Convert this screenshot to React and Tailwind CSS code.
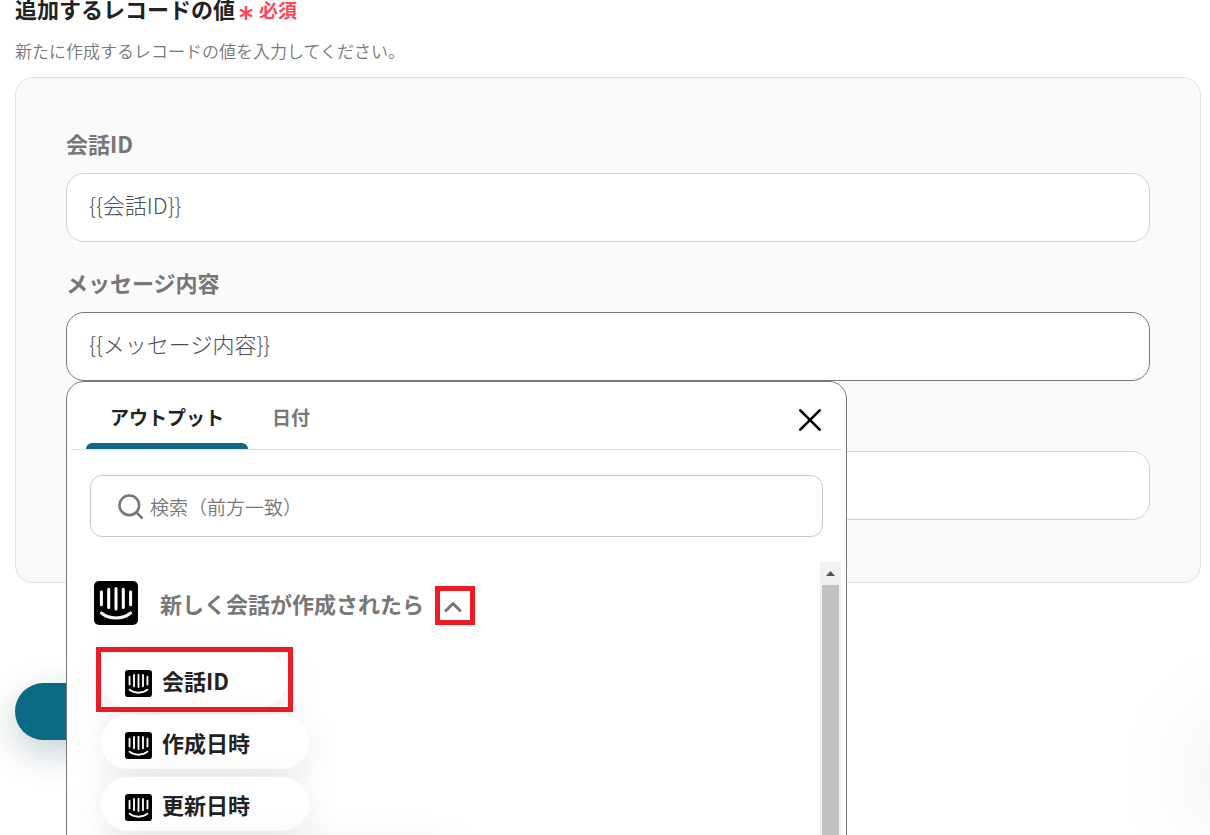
import React, { useState } from 'react';

const FIELDS = [
    { id: 'conversation-id', label: '会話ID', value: '{{会話ID}}' },
    { id: 'message-body', label: 'メッセージ内容', value: '{{メッセージ内容}}' },
    { id: 'created-at', label: '', value: '' },
];

const OUTPUTS = ['会話ID', '作成日時', '更新日時', 'メッセージ送信者の名前'];

const TABS = ['アウトプット', '日付'];

function IntercomIcon({ className }) {
    return (
        <svg className={className} viewBox="0 0 44 44" fill="none" stroke="#fff" strokeWidth="3" strokeLinecap="round">
            <rect width="44" height="44" rx="5" fill="#000" stroke="none" />
            <path d="M7.4 10.8v13M14.7 8.2v18.4M22 7.5v20.4M29.3 8.2v18.4M36.6 10.8v13" />
            <path d="M7.4 32c4 3.3 9 5 14.6 5s10.600-1.700 14.600-5" />
        </svg>
    );
}

function SearchIcon() {
    return (
        <svg className="mt-0.5 h-[26px] w-[26px] shrink-0" viewBox="0 0 26 26" fill="none" stroke="#777" strokeWidth="2.6">
            <circle cx="11.3" cy="11.3" r="9.8" />
            <path d="M18.2 18.2l6.3 6.3" />
        </svg>
    );
}

function CloseIcon() {
    return (
        <svg className="h-6 w-6" viewBox="0 0 24 24" fill="none" stroke="#000" strokeWidth="2.6" strokeLinecap="round">
            <path d="M2.3 2.3l19.4 19.4M21.7 2.3L2.3 21.7" />
        </svg>
    );
}

function Scrollbar() {
    return (
        <div className="flex w-[21px] shrink-0 flex-col items-center bg-[#f1f1f1]">
            <div className="flex h-[23px] items-center justify-center">
                <svg className="h-[5px] w-[9px]" viewBox="0 0 9 5" fill="#505050">
                    <path d="M4.5 0L9 5H0z" />
                </svg>
            </div>
            <div className="w-[17px] flex-1 bg-[#c1c1c1]" />
        </div>
    );
}

function OutputPill({ name, marked }) {
    return (
        <li className="relative">
            <button
                type="button"
                className="flex h-[54px] items-center gap-2.5 rounded-full bg-white pr-[59px] pl-6 text-[22px] font-bold whitespace-nowrap text-[#222] shadow-[0_8px_40px_rgba(0,0,0,0.09)]"
            >
                <IntercomIcon className="mt-1.5 h-[27px] w-[27px]" />
                {name}
            </button>
            {marked && <span className="pointer-events-none absolute -inset-x-[5px] -top-1.5 -bottom-[5px] border-[5px] border-[#ed1c24]" />}
        </li>
    );
}

function OutputMenu() {
    const [tab, setTab] = useState(TABS[0]);
    const [open, setOpen] = useState(true);
    const [query, setQuery] = useState('');

    return (
        <div className="absolute top-full left-0 z-10 flex h-[600px] w-full max-w-[781px] flex-col rounded-[18px] border border-[#777] bg-white pr-[5px] pl-1">
            <div className="flex h-[68px] shrink-0 items-stretch border-b border-[#e0e0e0] pl-[15px]">
                <div role="tablist" className="flex">
                    {TABS.map((name) => (
                        <button
                            key={name}
                            type="button"
                            role="tab"
                            aria-selected={tab === name}
                            onClick={() => setTab(name)}
                            className={
                                tab === name
                                    ? 'flex flex-col text-[19px] font-bold text-[#222]'
                                    : 'flex flex-col text-[19px] font-bold text-[#777]'
                            }
                        >
                            <span className="px-6 pt-[21px] leading-7">{name}</span>
                            {tab === name && <span className="mt-auto h-1.5 w-full rounded-t-md bg-[#0a6a83]" />}
                        </button>
                    ))}
                </div>
                <button type="button" aria-label="閉じる" className="mr-[19px] ml-auto flex items-center pt-2">
                    <CloseIcon />
                </button>
            </div>

            <div className="mr-[18px] ml-[19px] mt-[25px] flex h-[62px] shrink-0 items-center gap-1.5 rounded-xl border border-[#c8c8c8] px-[27px]">
                <SearchIcon />
                <input
                    type="text"
                    aria-label="検索"
                    placeholder="検索（前方一致）"
                    value={query}
                    onChange={(e) => setQuery(e.target.value)}
                    className="mt-0.5 min-w-0 flex-1 bg-transparent text-[19px] font-[350] text-[#444] outline-none placeholder:text-[#777]"
                />
            </div>

            <div className="mt-[25px] flex min-h-0 flex-1">
                <div className="min-w-0 flex-1 overflow-hidden pt-[19px] pl-[23px]">
                    <div className="flex h-11 items-center">
                        <IntercomIcon className="h-11 w-11" />
                        <span className="ml-[22px] text-[22px] font-bold text-[#777]">新しく会話が作成されたら</span>
                        <button
                            type="button"
                            aria-label="開閉"
                            onClick={() => setOpen(!open)}
                            className="mt-1 ml-[11px] flex h-[39px] w-10 items-center border-[5px] border-[#ed1c24] pt-1 pl-1"
                        >
                            <svg
                                className="h-3 w-[18px]"
                                viewBox="0 0 18 12"
                                fill="none"
                                stroke="#777"
                                strokeWidth="3"
                                strokeLinecap="round"
                                strokeLinejoin="round"
                            >
                                <path d="M2 9.500L9 2.500l7 7" />
                            </svg>
                        </button>
                    </div>
                    {open && (
                        <ul className="mt-7 flex flex-col items-start gap-2 pl-[7px]">
                            {OUTPUTS.map((name, i) => (
                                <OutputPill key={name} name={name} marked={i === 0} />
                            ))}
                        </ul>
                    )}
                </div>
                <Scrollbar />
            </div>
        </div>
    );
}

export default function App() {
    const [values, setValues] = useState(FIELDS.map((f) => f.value));
    const [active, setActive] = useState('message-body');

    const update = (i, value) => {
        setValues(values.map((v, n) => (n === i ? value : v)));
    };

    return (
        <form className="relative h-screen overflow-hidden bg-white pr-[9px] pl-[15px] font-['Noto_Sans_CJK_JP',sans-serif]">
            <h1 className="flex h-4 items-center text-[22px] font-bold text-[#222]">
                追加するレコードの値
                <svg className="mt-2.5 ml-1 h-[14px] w-[14px]" viewBox="0 0 14 14" fill="none" stroke="#ff4757" strokeWidth="2.4">
                    <path d="M7 0v14M1 3.5l12 7M13 3.5l-12 7" />
                </svg>
                <span className="mt-1 ml-1.5 text-[19px] font-bold text-[#ff4757]">必須</span>
            </h1>
            <p className="mt-[23px] text-[17px] leading-6 font-[350] text-[#777]">新たに作成するレコードの値を入力してください。</p>

            <div className="mt-3.5 flex flex-col gap-[26px] rounded-[18px] border border-[#dfe1e5] bg-[#fafafa] px-[50px] pt-[51px] pb-[62px]">
                {FIELDS.map((field, i) => (
                    <div key={field.id}>
                        <label htmlFor={field.id} className="mb-4 block min-h-7 text-[22px] leading-7 font-bold text-[#777]">
                            {field.label}
                        </label>
                        <div className="relative">
                            <input
                                id={field.id}
                                type="text"
                                value={values[i]}
                                onFocus={() => setActive(field.id)}
                                onChange={(e) => update(i, e.target.value)}
                                className={
                                    active === field.id
                                        ? 'block h-[69px] w-full rounded-[18px] border border-[#777] bg-white px-[22px] pb-2 text-[22px] font-light text-[#495057] outline-none'
                                        : 'block h-[69px] w-full rounded-[18px] border border-[#ced4da] bg-white px-[22px] pb-2 text-[22px] font-light text-[#495057] outline-none'
                                }
                            />
                            {active === field.id && <OutputMenu />}
                        </div>
                    </div>
                ))}
            </div>

            <button
                type="submit"
                aria-label="保存する"
                className="mt-[100px] block h-[57px] w-[300px] rounded-full bg-[#0a6a83] shadow-[0_12px_36px_rgba(10,50,70,0.24)]"
            />

            <div className="absolute -right-[72px] bottom-8 h-14 w-14 rounded-full shadow-[0_0_110px_20px_rgba(0,0,0,0.12)]" />
        </form>
    );
}
